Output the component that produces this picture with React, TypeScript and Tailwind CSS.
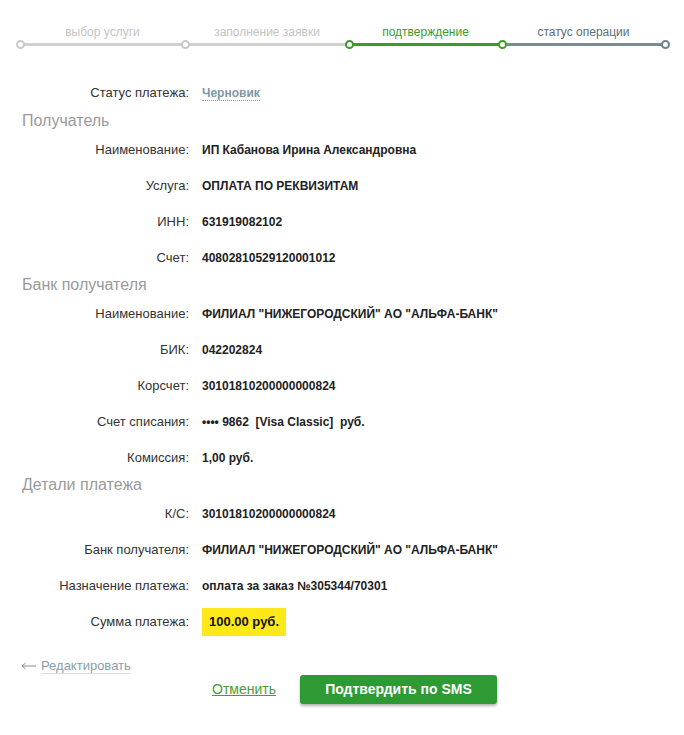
import React from 'react'

type Step = { label: string; width: string; text: string; line: string; dot: string }

const steps: Step[] = [
    { label: 'выбор услуги', width: 'w-[165px]', text: 'text-[#c4c4c4]', line: 'bg-[#d0d0d0]', dot: 'border-[#c8c8c8]' },
    { label: 'заполнение заявки', width: 'w-[164px]', text: 'text-[#c4c4c4]', line: 'bg-[#d0d0d0]', dot: 'border-[#c8c8c8]' },
    { label: 'подтверждение', width: 'w-[153px]', text: 'text-[#3f9a2e]', line: 'bg-[#3f9a2e]', dot: 'border-[#3f9a2e]' },
    { label: 'статус операции', width: 'w-[163px]', text: 'text-[#5e6e7a]', line: 'bg-[#7b8a95]', dot: 'border-[#3f9a2e]' },
]

function Row({ label, children }: { label: string; children: React.ReactNode }) {
    return (
        <div className="flex h-[36px] items-center">
            <div className="w-[189px] shrink-0 text-right text-[13px] text-[#333]">{label}</div>
            <div className="pl-[13px] text-[12px] font-bold text-[#222]">{children}</div>
        </div>
    )
}

function Section({ title, first }: { title: string; first?: boolean }) {
    return (
        <div className={`pl-[22px] text-[16px] leading-[16px] text-[#9a9a9a] ${first ? 'h-[21px] pt-[2px]' : 'h-[20px] pt-[1px]'}`}>
            {title}
        </div>
    )
}

export default function App() {
    return (
        <div className="min-h-[735px] w-[684px] bg-white font-['Liberation_Sans',Arial,sans-serif]">
            {/* Stepper */}
            <div className="flex pl-[20px] pt-[24px]">
                {steps.map((s, i) => (
                    <div key={s.label} className={`relative ${s.width}`}>
                        <div className={`h-[16px] text-center text-[12px] leading-[16px] ${s.text}`}>{s.label}</div>
                        <div className="flex h-[9px] items-center">
                            <div className={`h-[3px] w-full ${s.line}`} />
                        </div>
                        <div className={`absolute left-[-4px] top-[16px] h-[9px] w-[9px] rounded-full border-2 bg-white ${s.dot}`} />
                        {i === steps.length - 1 && (
                            <div className="absolute right-[-5px] top-[16px] h-[9px] w-[9px] rounded-full border-2 border-[#6f7f8b] bg-white" />
                        )}
                    </div>
                ))}
            </div>

            {/* Details */}
            <div className="pt-[26px]">
                <Row label="Статус платежа:">
                    <span className="border-b border-dotted border-[#8aa0aa] text-[#7f97a3]">Черновик</span>
                </Row>
                <Section title="Получатель" first />
                <Row label="Наименование:">ИП Кабанова Ирина Александровна</Row>
                <Row label="Услуга:">ОПЛАТА ПО РЕКВИЗИТАМ</Row>
                <Row label="ИНН:">631919082102</Row>
                <Row label="Счет:">40802810529120001012</Row>
                <Section title="Банк получателя" />
                <Row label="Наименование:">ФИЛИАЛ "НИЖЕГОРОДСКИЙ" АО "АЛЬФА-БАНК"</Row>
                <Row label="БИК:">042202824</Row>
                <Row label="Корсчет:">30101810200000000824</Row>
                <Row label="Счет списания:">
                    <span className="whitespace-pre">•••• 9862  [Visa Classic]  руб.</span>
                </Row>
                <Row label="Комиссия:">1,00 руб.</Row>
                <Section title="Детали платежа" />
                <Row label="К/С:">30101810200000000824</Row>
                <Row label="Банк получателя:">ФИЛИАЛ "НИЖЕГОРОДСКИЙ" АО "АЛЬФА-БАНК"</Row>
                <Row label="Назначение платежа:">оплата за заказ №305344/70301</Row>
                <Row label="Сумма платежа:">
                    <span className="inline-block bg-[#ffe81a] px-[7px] py-[6px] text-[13px] leading-[16px] text-[#111]">100.00 руб.</span>
                </Row>
            </div>

            {/* Actions */}
            <div className="mt-[18px] flex items-center pl-[21px] text-[13px]">
                <svg width="15" height="8" viewBox="0 0 15 8" className="text-[#888]">
                    <path d="M15 4H1.5M4.5 1L1.2 4l3.3 3" fill="none" stroke="currentColor" strokeWidth="1" />
                </svg>
                <span className="ml-[5px] border-b border-[#dcdcdc] leading-[15px] text-[#8aa0aa]">Редактировать</span>
            </div>
            <div className="mt-[1px] flex items-center">
                <a className="ml-[212px] text-[14px] text-[#4a9a3a] underline" href="#">Отменить</a>
                <button className="ml-[24px] h-[29px] w-[197px] rounded-[3px] bg-[#2d9a34] text-[14px] font-bold text-white shadow-[0_2px_3px_rgba(0,0,0,0.3)]">
                    Подтвердить по SMS
                </button>
            </div>
        </div>
    )
}
